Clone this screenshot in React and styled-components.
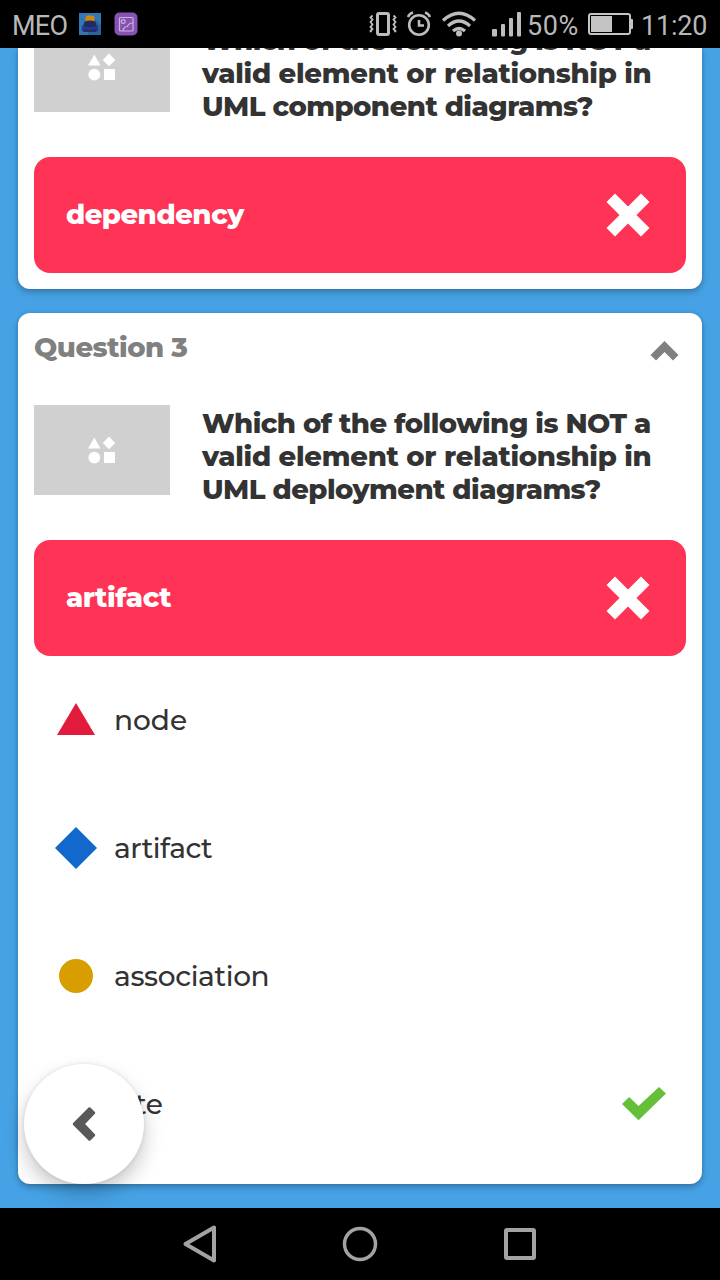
import React from "react";
import styled, { createGlobalStyle } from "styled-components";

const GlobalStyle = createGlobalStyle`
  *, *::before, *::after { box-sizing: border-box; }
  body { margin: 0; background: #000; }
  svg { display: block; flex: none; }
`;

const Screen = styled.div`
  position: relative;
  display: flex;
  flex-direction: column;
  width: 720px;
  height: 1280px;
  overflow: hidden;
  background: #46a2e5;
  color: #333;
  font-family: Montserrat, Inter, "Liberation Sans", sans-serif;
`;

const StatusBar = styled.header`
  flex: none;
  display: flex;
  align-items: center;
  height: 48px;
  padding: 0 12px;
  background: #000;
  color: #b8b8b8;
  font-family: Roboto, "Liberation Sans", sans-serif;
`;

const StatusText = styled.span`
  flex: none;
  width: ${(p) => p.$width}px;
  margin-left: ${(p) => p.$gap || 0}px;
  padding-top: 3px;
  font-size: 27px;
  line-height: 30px;
  letter-spacing: ${(p) => p.$track || 0}px;
  white-space: nowrap;
`;

const StatusIcons = styled.svg`
  margin-left: ${(p) => p.$gap || 0}px;
`;

const Feed = styled.main`
  flex: 1;
  min-height: 0;
  display: flex;
  flex-direction: column;
  gap: 24px;
  padding: 0 18px 24px;
  overflow: hidden;
`;

const Card = styled.section`
  flex: none;
  display: flex;
  flex-direction: column;
  height: ${(p) => p.$height}px;
  padding: 0 16px;
  border-radius: ${(p) => (p.$scrolled ? "0 0 12px 12px" : "12px")};
  background: #fff;
  box-shadow: 0 3px 7px rgba(0, 0, 0, 0.26), 0 0 3px rgba(0, 0, 0, 0.14);
`;

const CardHeader = styled.div`
  display: flex;
  justify-content: space-between;
  height: 92px;
  padding: 18px 7px 0 0;
  color: #808080;
`;

const Title = styled.h2`
  margin: 0;
  font-size: 27.5px;
  font-weight: 800;
  line-height: 33px;
  letter-spacing: ${(p) => p.$track}px;
`;

const Chevron = styled.svg`
  margin-top: 10px;
`;

const QuestionRow = styled.div`
  flex: none;
  display: flex;
  gap: 32px;
  height: 135px;
  margin-top: ${(p) => p.$shift || 0}px;
`;

const Thumb = styled.div`
  flex: none;
  display: flex;
  align-items: center;
  justify-content: center;
  width: 136px;
  height: 90px;
  background: #d0d0d0;
`;

const Prompt = styled.p`
  margin: 0;
  padding-top: 2px;
  font-size: 27.5px;
  font-weight: 800;
  line-height: 33px;
  white-space: nowrap;
`;

const Line = styled.span`
  display: block;
  width: max-content;
  letter-spacing: ${(p) => p.$track}px;
`;

const AnswerBanner = styled.div`
  flex: none;
  display: flex;
  align-items: center;
  justify-content: space-between;
  height: 116px;
  padding: 0 36px 0 32px;
  border-radius: 16px;
  background: #ff3355;
  color: #fff;
`;

const AnswerText = styled(Title)`
  padding-bottom: 2px;
`;

const Choices = styled.ul`
  margin: 0;
  padding: 0;
  list-style: none;
`;

const Choice = styled.li`
  display: flex;
  align-items: center;
  gap: 16px;
  height: 128px;
  padding: 0 20px;
`;

const ChoiceLabel = styled.span`
  flex: 1;
  padding-bottom: 1px;
  font-size: 28px;
  font-weight: 500;
  line-height: 34px;
`;

const NavBar = styled.nav`
  flex: none;
  display: flex;
  align-items: center;
  justify-content: center;
  gap: 112px;
  height: 72px;
  background: #000;
`;

const BackButton = styled.button`
  position: absolute;
  left: 24px;
  top: 1064px;
  display: flex;
  align-items: center;
  justify-content: center;
  width: 120px;
  height: 120px;
  padding: 0;
  border: 0;
  border-radius: 50%;
  background: #fff;
  box-shadow: 0 10px 20px rgba(0, 0, 0, 0.22), 0 0 4px rgba(0, 0, 0, 0.1);
`;

const AppBadges = () => (
  <StatusIcons width="60" height="48" viewBox="0 0 60 48">
    <rect x="0" y="13" width="22" height="22" fill="#3079b8" />
    <path d="M16 19l6 6v10H8z" fill="#28659f" />
    <path d="M6.500 21.500V18q0-2.500 2.500-2.500h4q2.500 0 2.500 2.500v3.500z" fill="#d28a0c" />
    <path d="M5 23q0-2.500 6-2.500t6 2.500v6H5z" fill="#202b63" />
    <path d="M4.500 24q-2.500 3-1.500 7l2 1h12l2-1q1-4-1.500-7l-2 3h-9z" fill="#293885" />
    <path d="M5 29q6 1.500 12 0v3H5z" fill="#222d70" />
    <rect x="35.500" y="12.500" width="23" height="23" rx="5" fill="#8753b3" />
    <g fill="none" stroke="#c9b3dc" strokeWidth="1.200">
      <rect x="40.500" y="17.500" width="13.500" height="13.500" rx="1" />
      <circle cx="44.200" cy="21.500" r="1.900" />
      <path d="M44 31q.5-4.500 4.500-4.500 1-3.500 5.500-3.500" />
    </g>
  </StatusIcons>
);

const SignalIcons = () => (
  <StatusIcons $gap={230} width="154" height="48" viewBox="0 0 154 48" fill="none" stroke="#bdbdbd">
    <rect x="8.500" y="13.500" width="11" height="21" rx="1.500" strokeWidth="3" />
    <path d="M3.500 15.500l-2 2 2 2-2 2.500 2 2.500-2 2.500 2 2-2 2 1 1M24.500 15.500l2 2-2 2 2 2.500-2 2.500 2 2.500-2 2 2 2-1 1" strokeWidth="1.800" />
    <circle cx="50" cy="25" r="9.800" strokeWidth="2.600" />
    <path d="M50 20v5.500h5" strokeWidth="2.600" />
    <path d="M39 17q1.500-3.500 5-4.500M61 17q-1.500-3.500-5-4.500" strokeWidth="2.500" />
    <path d="M74 20.500q16-14.500 32 0M79 26q11-10 22 0M84 31q6-5 12 0" strokeWidth="3.200" />
    <circle cx="90" cy="33.500" r="3" fill="#bdbdbd" stroke="none" />
    <g fill="#bdbdbd" stroke="none">
      <rect x="123" y="29" width="5" height="7.500" rx="1" />
      <rect x="132" y="24" width="4" height="12.500" rx="1" />
      <rect x="140" y="18" width="4" height="18.500" rx="1" />
      <rect x="148" y="12" width="4" height="24.500" rx="1" />
    </g>
  </StatusIcons>
);

const Battery = () => (
  <StatusIcons $gap={8} width="46" height="48" viewBox="0 0 46 48">
    <rect x="1" y="14" width="41" height="20" rx="2" fill="none" stroke="#c4c4c4" strokeWidth="2" />
    <rect x="3" y="16" width="21" height="16" fill="#c4c4c4" />
    <path d="M42 19h2q1 0 1 1v8q0 1-1 1h-2z" fill="#c4c4c4" />
  </StatusIcons>
);

const PlaceholderShapes = () => (
  <svg width="28" height="28" viewBox="0 0 28 28" fill="#fff">
    <path d="M6.300 1.500l6.200 11H0z" />
    <path d="M21 .500L27.300 7 21 13.300 14.800 7z" />
    <circle cx="6.300" cy="21.700" r="5.900" />
    <rect x="16" y="16" width="11" height="11" />
  </svg>
);

const Cross = () => (
  <svg width="44" height="44" viewBox="0 0 44 44">
    <path d="M9 .500l13 13 13-13L43.500 9l-13 13 13 13-8.500 8.500-13-13-13 13L.500 35l13-13L.500 9z" fill="#fff" />
  </svg>
);

const Check = () => (
  <svg width="44" height="34" viewBox="0 0 44 34">
    <path d="M0 17L7.200 10l9.300 9L37 0l7 6.500L16.500 33.300z" fill="#66bf39" />
  </svg>
);

const shapes = {
  triangle: <path d="M22 5l19 32H3z" fill="#e21b3c" />,
  diamond: <path d="M22 1l21 21-21 21L1 22z" fill="#1368ce" />,
  circle: <circle cx="22" cy="22" r="17" fill="#d89e00" />,
  square: <rect x="6" y="6" width="32" height="32" fill="#26890c" />,
};

const Shape = ({ kind }) => (
  <svg width="44" height="44" viewBox="0 0 44 44">
    {shapes[kind]}
  </svg>
);

const Question = ({ shift, lines, answer, answerTrack }) => (
  <>
    <QuestionRow $shift={shift}>
      <Thumb>
        <PlaceholderShapes />
      </Thumb>
      <Prompt>
        {lines.map(([text, track]) => (
          <Line key={text} $track={track}>
            {text}
          </Line>
        ))}
      </Prompt>
    </QuestionRow>
    <AnswerBanner>
      <AnswerText as="span" $track={answerTrack}>
        {answer}
      </AnswerText>
      <Cross />
    </AnswerBanner>
  </>
);

const choices = [
  { kind: "triangle", label: "node", track: 0 },
  { kind: "diamond", label: "artifact", track: -0.5 },
  { kind: "circle", label: "association", track: -0.35 },
  { kind: "square", label: "site", track: -0.4, correct: true },
];

export default function App() {
  return (
    <Screen>
      <GlobalStyle />
      <StatusBar>
        <StatusText $width={67} $track={-0.7}>MEO</StatusText>
        <AppBadges />
        <SignalIcons />
        <StatusText $width={53} $gap={4} $track={0.6}>50%</StatusText>
        <Battery />
        <StatusText $width={68} $gap={7} $track={-0.2}>11:20</StatusText>
      </StatusBar>
      <Feed>
        <Card $height={241} $scrolled>
          <Question
            shift={-26}
            lines={[
              ["Which of the following is NOT a", -0.5],
              ["valid element or relationship in", -0.27],
              ["UML component diagrams?", -0.52],
            ]}
            answer="dependency"
            answerTrack={-0.5}
          />
        </Card>
        <Card $height={871}>
          <CardHeader>
            <Title $track={-0.45}>Question 3</Title>
            <Chevron width="29" height="20" viewBox="0 0 29 20">
              <path d="M14.500 0L28.500 14l-5.500 5.500-8.500-8.500L6 19.500.5 14z" fill="#808080" />
            </Chevron>
          </CardHeader>
          <Question
            lines={[
              ["Which of the following is NOT a", -0.5],
              ["valid element or relationship in", -0.27],
              ["UML deployment diagrams?", -0.52],
            ]}
            answer="artifact"
            answerTrack={-0.4}
          />
          <Choices>
            {choices.map(({ kind, label, track, correct }) => (
              <Choice key={label}>
                <Shape kind={kind} />
                <ChoiceLabel>
                  <Line $track={track}>{label}</Line>
                </ChoiceLabel>
                {correct && <Check />}
              </Choice>
            ))}
          </Choices>
        </Card>
      </Feed>
      <NavBar>
        <svg width="48" height="48" viewBox="0 0 48 48" fill="none" stroke="#a3a3a3" strokeWidth="4" strokeLinejoin="round">
          <path d="M38 7.500v33L9.500 24z" />
        </svg>
        <svg width="48" height="48" viewBox="0 0 48 48">
          <circle cx="24" cy="24" r="15.500" fill="none" stroke="#a3a3a3" strokeWidth="3.500" />
        </svg>
        <svg width="48" height="48" viewBox="0 0 48 48">
          <rect x="10" y="10" width="28" height="28" rx="1" fill="none" stroke="#a3a3a3" strokeWidth="4" />
        </svg>
      </NavBar>
      <BackButton aria-label="Back">
        <svg width="24" height="36" viewBox="0 0 24 36">
          <path d="M2 18L17.500 2.500l4.500 4.500L11.500 18 22 29l-4.500 4.500z" fill="#595959" stroke="#595959" strokeWidth="2.500" strokeLinejoin="round" />
        </svg>
      </BackButton>
    </Screen>
  );
}
